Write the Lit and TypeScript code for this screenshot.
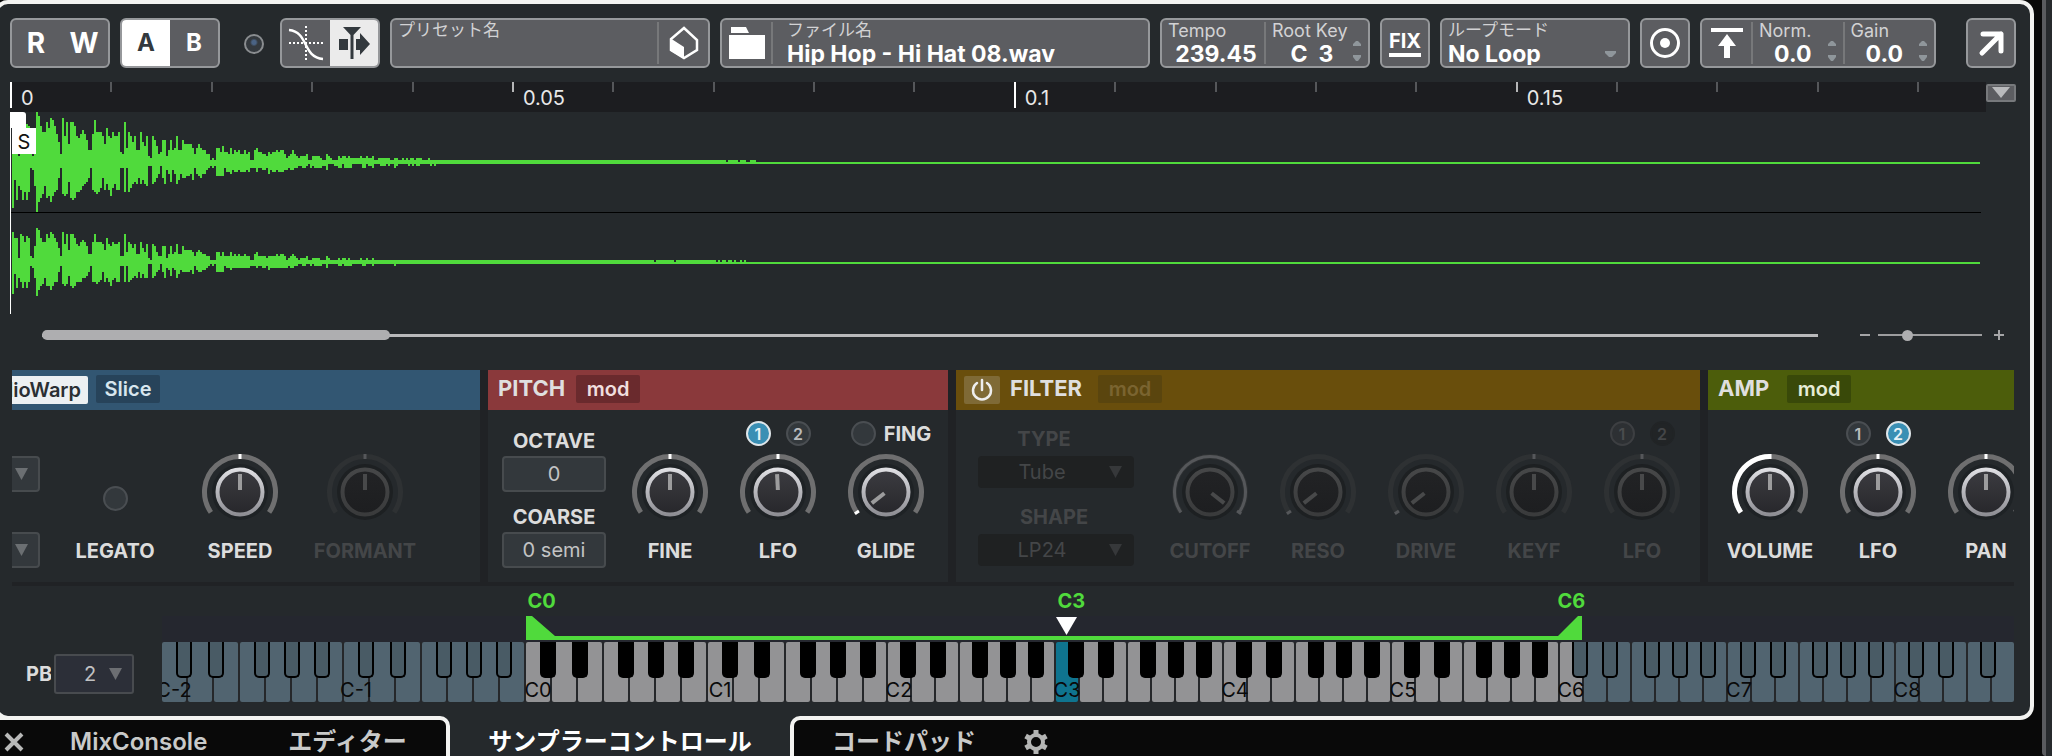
import { LitElement, html, svg, css, nothing } from "lit";
import { customElement, property } from "lit/decorators.js";
import { classMap } from "lit/directives/class-map.js";

// Peak heights above and below the centre line as [column, value] pairs, in 2px cells.
const PEAKS_UP = [
  0,21,1,16,3,2,4,19,5,18,6,14,7,18,8,17,9,3,10,2,11,10,12,24,13,22,14,17,15,14,17,19,18,16,19,21,20,20,21,17,22,13,23,9,
  24,3,25,21,26,12,27,19,28,8,29,19,31,17,32,12,33,11,34,13,35,15,36,13,37,10,38,5,40,13,41,20,42,14,45,12,46,8,47,16,48,12,
  49,11,50,14,51,12,53,14,54,4,55,3,56,19,57,6,58,14,59,12,60,9,61,12,62,5,64,14,65,9,66,7,67,12,68,2,69,1,70,12,71,10,
  72,7,73,3,74,4,75,10,77,2,78,5,79,10,80,5,81,6,82,12,83,5,85,10,86,8,90,6,91,3,92,6,93,8,94,6,95,5,97,3,99,0,100,1,101,0,
  102,6,104,4,105,7,106,4,108,3,109,6,110,3,111,5,112,4,113,5,114,3,116,5,117,3,118,4,119,0,121,5,122,6,123,4,125,3,127,2,
  128,4,129,3,130,4,132,5,133,4,134,5,136,3,137,1,138,2,139,3,140,5,141,3,142,2,143,1,144,2,147,3,148,0,150,2,154,1,155,0,
  157,3,158,2,159,1,160,0,163,2,164,1,165,2,167,1,168,2,169,1,174,2,175,1,177,2,178,1,180,2,181,0,183,1,189,0,191,1,193,0,
  195,1,196,0,197,1,198,0,199,1,201,0,202,1,205,0,208,1,209,0,213,0,
];
const PEAKS_DOWN = [
  0,22,1,8,2,18,3,11,4,13,5,18,6,14,7,18,8,14,9,2,10,3,11,11,12,24,13,19,14,17,15,15,16,11,17,17,18,16,19,19,20,16,21,14,
  22,13,23,7,24,2,25,15,26,16,27,15,28,9,29,17,30,18,31,17,32,14,34,13,35,11,36,10,37,9,38,7,39,2,40,13,41,14,42,15,43,14,
  44,12,45,7,46,13,47,10,48,13,49,16,50,12,51,10,52,13,54,2,56,14,57,2,58,14,59,12,60,10,61,9,62,10,63,7,64,10,65,8,66,10,
  67,11,68,1,70,10,71,9,72,7,73,5,74,1,75,7,76,10,77,3,78,5,79,9,80,3,81,5,82,10,83,8,84,5,85,7,87,6,89,5,90,8,91,2,92,5,
  93,6,94,7,95,5,97,3,98,2,99,1,100,2,101,1,102,6,106,2,107,4,109,5,110,3,111,4,113,3,114,4,117,3,118,4,119,2,122,4,123,2,
  125,3,127,2,128,5,129,3,130,4,132,3,133,4,136,3,138,2,139,3,141,2,143,1,145,2,147,1,148,0,149,2,150,1,151,2,155,1,157,3,
  158,0,161,1,163,2,165,0,166,2,170,0,175,2,177,0,178,1,180,2,181,0,184,1,187,0,188,1,189,0,191,2,192,1,193,0,198,1,199,0,
  200,1,201,0,202,1,204,0,209,1,210,0,211,1,212,0,213,0,
];

function steps(peaks: number[], base: number, dir: number, scale: (v: number) => number) {
  let d = `M2 ${base}`;
  for (let i = 0; i < peaks.length - 2; i += 2) {
    d += `V${base + dir * 2 * scale(peaks[i + 1])}H${2 + peaks[i + 2] * 2}`;
  }
  return d + `V${base}Z`;
}

const full = (v: number) => v;
const soft = (v: number) => Math.floor(v * 0.67 + 0.3);

const UI = css`
  :host { font-family: Inter, "Noto Sans CJK JP", sans-serif; }
  * { box-sizing: border-box; }
  button, input, select { font: inherit; color: inherit; margin: 0; padding: 0; border: 0; background: none; min-width: 0; }
  button { display: inline-flex; align-items: center; justify-content: center; cursor: pointer; }
  select { appearance: none; }
  svg { display: block; }
`;

@customElement("s-knob")
class Knob extends LitElement {
  @property() label = "";
  @property({ type: Number }) angle = 0;
  @property({ type: Number }) mark = 0;
  @property() fill = "";
  @property({ type: Boolean, reflect: true }) dim = false;

  static styles = [UI, css`
    :host { display: block; width: 108px; flex: none; --ring: #6f6f70; --mark: #fff; --hub: #1e2225; --pointer: #9c9c9d; --edge-a: #dedee2; --edge-b: #8e8e94; --face-a: #3c3c41; --face-b: #27272b; --text: #dcdcdc; }
    :host([dim]) { --ring: #2e3133; --mark: #55575a; --hub: #1d2022; --pointer: #48494a; --edge-a: #464748; --edge-b: #3a3b3c; --face-a: #222325; --face-b: #1d1e20; --text: #444648; }
    .cell { display: flex; flex-direction: column; align-items: center; }
    .top { height: 42px; padding-top: 11px; display: flex; align-items: flex-start; justify-content: center; white-space: nowrap; }
    .dial { width: 80px; height: 80px; overflow: visible; }
    .range { position: absolute; opacity: 0; width: 80px; height: 80px; }
    .body { position: relative; }
    .caption { margin-top: 7px; height: 24px; line-height: 24px; font-size: 20px; font-weight: 700; color: var(--text); }
    .ring { fill: none; stroke: var(--ring); stroke-width: 5; }
    .arc { fill: none; stroke: var(--mark); stroke-width: 5; }
    .thin { stroke-width: 3; }
    .hub { fill: var(--hub); }
    .mark { fill: var(--mark); }
    .pointer { fill: var(--pointer); }
    .ea { stop-color: var(--edge-a); } .eb { stop-color: var(--edge-b); }
    .fa { stop-color: var(--face-a); } .fb { stop-color: var(--face-b); }
  `];

  private arc(from: number, to: number) {
    const p = (a: number) => `${(35.5 * Math.sin(a * Math.PI / 180)).toFixed(2)} ${(-35.5 * Math.cos(a * Math.PI / 180)).toFixed(2)}`;
    return `M${p(from)}A35.5 35.5 0 ${to - from > 180 ? 1 : 0} 1 ${p(to)}`;
  }

  render() {
    return html`
      <div class="cell">
        <div class="top"><slot></slot></div>
        <div class="body">
          <input class="range" id="r" type="range" min="-125" max="125" .value=${String(this.angle)}>
          <svg class="dial" viewBox="-40 -40 80 80" aria-hidden="true">
            <defs>
              <linearGradient id="edge" x1="0" y1="0" x2="0" y2="1"><stop class="ea" offset="0"/><stop class="eb" offset="1"/></linearGradient>
              <linearGradient id="face" x1="0" y1="0" x2="0" y2="1"><stop class="fa" offset="0"/><stop class="fb" offset="1"/></linearGradient>
            </defs>
            <path class="ring" d=${this.arc(-125, 125)} />
            ${this.fill === "half" ? svg`<path class="arc" d=${this.arc(-125, 1)} />` : nothing}
            ${this.fill === "all" ? svg`<path class="arc thin" d=${this.arc(-125, 125)} />` : nothing}
            <rect class="mark" x="-1.5" y="-38" width="3" height="5" transform="rotate(${this.mark})" />
            <circle class="hub" r="28" />
            <circle r="22.5" fill="url(#face)" stroke="url(#edge)" stroke-width="4" />
            <rect class="pointer" x="-2" y="-18" width="4" height="16" transform="rotate(${this.angle})" />
          </svg>
        </div>
        <label class="caption" for="r">${this.label}</label>
      </div>`;
  }
}

@customElement("s-keyboard")
class Keyboard extends LitElement {
  static styles = [UI, css`
    :host { display: block; }
    .notes { position: relative; height: 30px; font-size: 20px; font-weight: 700; line-height: 22px; color: #50da3c; }
    .note { position: absolute; top: 4px; transform: translateX(-50%); }
    .strip { width: 100%; height: 26px; background: #25272f; }
    .keys { display: flex; gap: 2px; height: 60px; overflow: hidden; background: #25272a; }
    .key { flex: 11 0 0; position: relative; min-width: 0; }
    .wide { flex-grow: 12; }
    .white { width: 100%; height: 60px; border-radius: 2px; background: #516470; color: #0a0a0a; align-items: flex-end; padding-bottom: 1px; font-size: 20px; line-height: 22px; white-space: nowrap; overflow: visible; }
    .tag { position: relative; z-index: 1; pointer-events: none; }
    .on .white { background: #939395; }
    .root .white { background: #0f748f; }
    .black { position: absolute; z-index: 2; top: 0; width: 16px; height: 36px; background: #495b65; border: 2px solid #000; border-top: 0; border-radius: 0 0 5px 5px; }
    .lit { background: #000; }
    .k0, .k3 { right: -6px; }
    .k1 { right: -12px; }
    .k4 { right: -10px; }
    .k5 { right: -14px; }
  `];

  render() {
    const whites = Array.from({ length: 75 }, (_, i) => i);
    const pins: [string, number][] = [["C0", 20.5], ["C3", 49.1], ["C6", 76.1]];
    return html`
      <div class="notes">${pins.map(([t, x]) => html`<span class="note" style="left:${x}%">${t}</span>`)}</div>
      <svg class="strip" viewBox="0 0 1852 26" preserveAspectRatio="none" aria-hidden="true">
        <path fill="#50da3c" d="M364 0h6l23 20h1003l20-20h4v24H364Z" />
        <path fill="#fff" d="M894 1h21l-10.500 18Z" />
      </svg>
      <div class="keys">
        ${whites.map((i) => {
          const p = i % 7;
          const name = p === 0 ? `C${i / 7 - 2}` : "";
          const sharp = p !== 2 && p !== 6 && i < 74;
          return html`<div class=${classMap({ key: true, wide: i < 27, on: i >= 14 && i <= 56, root: i === 35 })}>
            <button class="white" aria-label=${name || "key"}><span class="tag">${name}</span></button>
            ${sharp ? html`<button aria-label="sharp" class=${classMap({ black: true, lit: i >= 14 && i < 56, [`k${p}`]: true })}></button>` : nothing}
          </div>`;
        })}
      </div>`;
  }
}

@customElement("app-root")
class AppRoot extends LitElement {
  static styles = [UI, css`
    :host { display: flex; background: #090909; color: #fff; line-height: 22px; overflow: hidden; }
    .stage { flex: 1; min-width: 0; }
    .side { width: 10px; margin-left: 8px; background: #272a2d; border-left: 4px solid #5a5b5f; border-bottom-left-radius: 4px; }
    .panel { margin-left: -6px; padding: 14px 14px 14px 12px; border: 4px solid #f3f3f1; border-radius: 14px; background: #25292c; }

    .bar { display: flex; gap: 10px; height: 50px; }
    .box { display: flex; flex: none; border: 2px solid #96989b; border-radius: 6px; background: #5c5d61; overflow: hidden; }
    .w50 { width: 50px; } .w100 { width: 100px; } .w190 { width: 190px; } .w210 { width: 210px; } .w236 { width: 236px; } .w320 { width: 320px; }
    .grow { flex: 1; min-width: 0; }
    .end { margin-left: 20px; }
    .half { flex: 1; font-weight: 700; font-size: 24px; }
    .rw { font-size: 28px; }
    .sel { background: #fff; color: #33393e; }
    .pale { background: #ebebeb; }
    .led { align-self: center; width: 20px; height: 20px; margin: 2px 6px 0 14px; border: 2px solid #8a8d90; border-radius: 50%; background: radial-gradient(circle at 50% 40%, #4a6384 2px, #34393e 4px); }
    .field { flex: 1; min-width: 0; display: grid; grid-template-columns: 1fr 16px; grid-template-rows: 22px 23px; padding-left: 6px; align-content: start; }
    .plain { grid-template-columns: 1fr; }
    .file { padding-left: 14px; }
    .name { grid-column: 1 / -1; grid-row: 1; font-size: 18px; color: #d2d2d4; white-space: nowrap; }
    .jp { font-size: 17px; line-height: 20px; }
    .value { grid-column: 1; grid-row: 2; width: 100%; font-size: 23px; font-weight: 700; height: 23px; outline: none; }
    .mid { text-align: center; }
    .spin { width: 10px; height: 22px; grid-column: 2; grid-row: 1 / 3; margin-top: 20px; fill: #8f969b; }
    .rule { width: 2px; flex: none; margin: 2px 0; background: #77787a; }
    .icon { width: 49px; flex: none; }
    .fix { align-self: center; margin: auto; font-size: 20px; font-weight: 700; line-height: 22px; padding-bottom: 1px; border-bottom: 4px solid #fff; }

    .rulerrow { display: flex; margin-top: 14px; height: 30px; }
    .ruler { flex: 1; min-width: 0; display: flex; overflow: hidden; background: #1c1d20; }
    .tick { flex: 0 0 5.08%; position: relative; padding: 5px 0 0 11px; font-size: 20px; line-height: 22px; color: #e8e8e8; }
    .tick::before { content: ""; position: absolute; left: 0; top: 0; width: 2px; height: 10px; background: #55575a; }
    .mark::before { background: #b5b6b7; }
    .major::before { height: 26px; background: #fff; }
    .drop { width: 30px; height: 18px; margin-top: 2px; background: #5c5d61; border: 2px solid #77797c; border-radius: 2px; }

    .wave { position: relative; margin-right: 2px; }
    .wave svg { width: 100%; height: 202px; }
    .flag { position: absolute; left: 0; top: 0; width: 16px; height: 16px; background: #fff; border-radius: 0 3px 0 0; }
    .start { position: absolute; left: 2px; top: 16px; width: 24px; height: 26px; background: #fff; color: #111; font-size: 20px; line-height: 28px; text-align: center; }

    .scroll { display: flex; align-items: center; height: 10px; margin: 16px 12px 30px 32px; }
    .track { flex: 1; height: 3px; background: #b9b9bb; display: flex; align-items: center; }
    .thumb { width: 19.6%; height: 10px; border-radius: 5px; background: #aeaeb0; }
    .zoom { appearance: none; width: 104px; height: 12px; margin: 0 12px 0 8px; background: linear-gradient(#9d9d9f, #9d9d9f) center / 100% 2px no-repeat; }
    .zoom::-webkit-slider-thumb { appearance: none; width: 11px; height: 11px; border-radius: 50%; background: #aeaeb0; }
    .minus { margin-left: 42px; }

    .modules { display: flex; gap: 8px; margin: 0 2px; padding-bottom: 4px; background: #202225; overflow: hidden; }
    .module { flex: none; overflow: hidden; background: #25292c; }
    .last { flex: 1; min-width: 0; }
    .s1 { width: 468px; } .s2 { width: 460px; } .s3 { width: 744px; }
    .head { display: flex; align-items: flex-start; height: 40px; padding: 5px 0 0 10px; color: #dfdfdf; font-size: 20px; }
    .title { font-size: 22px; line-height: 26px; font-weight: 700; margin: 0; }
    .blue { background: #325672; padding-left: 0; }
    .red { background: #8a393b; }
    .amber { background: #694e0c; padding-left: 8px; }
    .green { background: #4c5d0b; }
    .chip { width: 64px; height: 28px; border-radius: 2px; font-weight: 600; }
    .cblue { background: #27435a; color: #d8e6ee; margin-left: 8px; }
    .cred { background: #6a2a2d; color: #f0dede; margin-left: 11px; }
    .camber { background: #5a450e; color: #7a6430; margin-left: 16px; }
    .cgreen { background: #394909; color: #e6ecd6; margin-left: 18px; }
    .warp { width: 76px; height: 28px; margin-top: 1px; justify-content: flex-end; padding-right: 7px; background: #ecf0f2; color: #2a2f33; font-weight: 600; border-radius: 0 2px 2px 0; white-space: nowrap; overflow: hidden; }
    .power { width: 36px; height: 28px; margin: 1px 10px 0 0; background: #7f6a36; border-radius: 2px; }
    .controls { display: flex; height: 172px; }
    .spaced { gap: 17px; }
    .amp { padding-left: 8px; }
    .pads { display: flex; flex-direction: column; gap: 13px; padding-top: 19px; flex: none; }
    .fields { width: 104px; margin-left: 14px; margin-right: 10px; }
    .faded { width: 156px; margin-left: 22px; margin-right: 22px; padding-top: 17px; gap: 17px; color: #444648; }
    .pad { display: flex; flex-direction: column; gap: 3px; font-size: 20px; font-weight: 700; line-height: 24px; text-align: center; color: #dcdcdc; }
    .faded .pad { color: inherit; gap: 5px; padding: 0; }
    .faded .type { padding-right: 24px; }
    .faded .shape { padding-right: 4px; }
    .slot { width: 100%; height: 36px; border: 2px solid #474b4e; border-radius: 4px; background: #33383c; color: #c2c3c4; font-weight: 400; text-align: center; text-align-last: center; }
    .faded .slot { height: 32px; border: 0; background-color: #1f2122; color: #444648; padding-right: 28px; }
    .pick { position: relative; display: flex; }
    .caret { position: absolute; right: 12px; top: 50%; margin-top: -6px; width: 13px; height: 12px; fill: currentColor; pointer-events: none; }
    .faded .caret { fill: #36383a; }
    .cuts { padding-top: 46px; gap: 40px; width: 28px; overflow: hidden; color: #6b6f72; }
    .cuts .pick { width: 80px; margin-left: -52px; }
    .legato { width: 108px; margin-left: 4px; padding-top: 76px; display: flex; flex-direction: column; align-items: center; gap: 28px; font-size: 20px; font-weight: 700; line-height: 24px; color: #dcdcdc; }
    .dot { appearance: none; width: 25px; height: 25px; flex: none; margin: 0; border: 2px solid #4a4e52; border-radius: 50%; background: #33383c; font-size: 16px; font-weight: 600; line-height: 20px; color: #b9bbbc; }
    .gap { margin-left: 15px; }
    .active { background: #3a8fb4; border-color: #dfe6ea; color: #e8f2f6; }
    .ghost { background: #2d3033; border-color: #3d3f42; color: #4a4c4e; }
    .none { background: #212426; border-color: #212426; color: #444648; }
    .fing { display: flex; align-items: center; gap: 8px; margin-left: 10px; font-size: 20px; font-weight: 700; color: #dcdcdc; }

    .play { display: grid; grid-template-columns: 152px 1fr; margin-right: 2px; }
    .bend { display: flex; align-items: flex-end; padding: 0 0 8px 16px; font-size: 20px; }
    .pb { width: 25px; margin-right: 3px; overflow: hidden; font-weight: 700; line-height: 40px; color: #dcdcdc; }
    .amount { width: 80px; height: 40px; padding-right: 8px; border: 2px solid #484b4f; border-radius: 3px; background: #2c2f38; color: #c0c1c2; text-align-last: center; }
    .bend .pick { color: #6c6e72; }

    .tabs { position: relative; display: flex; height: 40px; margin-top: -4px; font-size: 24px; font-weight: 600; line-height: 28px; color: #c9cac9; }
    .group { position: relative; z-index: 1; display: flex; align-items: center; border: 0 solid #f3f3f1; border-top-width: 4px; padding-top: 8px; background: #090909; white-space: nowrap; }
    .left { width: 450px; border-right-width: 4px; border-top-right-radius: 10px; }
    .right { border-left-width: 4px; border-top-left-radius: 10px; padding-left: 38px; padding-right: 24px; gap: 47px; }
    .tab { height: 28px; }
    .close { margin: 0 46px 0 4px; }
    .mix { margin-right: 81px; }
    .current { width: 360px; margin: 0 -10px; padding-top: 12px; background: #25292c; color: #fff; font-weight: 700; }
  `];

  private spin() {
    return html`<svg class="spin" viewBox="0 0 10 22" aria-hidden="true"><path d="M1 6h8v-2l-3-3h-2l-3 3ZM1 15h8v2l-3 4h-2l-3-4Z" /></svg>`;
  }
  private caret() {
    return html`<svg class="caret" viewBox="0 0 13 12" aria-hidden="true"><path d="M0 0h13L6.500 12Z" /></svg>`;
  }
  private field(id: string, name: string, value: string) {
    return html`<div class="field">
      <label class="name" for=${id}>${name}</label>
      <input class="value mid" id=${id} .value=${value}>${this.spin()}
    </div>`;
  }
  private lfo(one: string, two: string) {
    return html`<button class="dot ${one}">1</button><button class="dot gap ${two}">2</button>`;
  }

  private toolbar() {
    return html`<div class="bar">
      <div class="box w100"><button class="half rw">R</button><button class="half rw">W</button></div>
      <div class="box w100"><button class="half sel">A</button><button class="half">B</button></div>
      <span class="led"></span>
      <div class="box w100">
        <button class="half" aria-label="Snap to zero crossing"><svg width="40" height="40" viewBox="0 0 40 40" fill="none" stroke="#fff">
          <path d="M20 3v34M3 20h34" stroke-width="2" stroke-dasharray="2 2" /><path d="M3 7C23 9 16 34 37 36" stroke-width="2.500" /></svg></button>
        <button class="half pale" aria-label="Snap"><svg width="36" height="36" viewBox="0 0 36 36" fill="#33393e">
          <path d="M7 2h18l-7.500 8v24h-3v-24ZM3 14h9v11H3ZM20 14h4V8l10 11-10 11v-5h-4Z" /></svg></button>
      </div>
      <div class="box w320">
        <div class="field plain"><span class="name jp">プリセット名</span></div>
        <span class="rule"></span>
        <button class="icon" aria-label="Preset"><svg width="30" height="34" viewBox="0 0 30 34"><path d="M15 2 28 14v10L15 32 2 24V13Z" fill="none" stroke="#fff" stroke-width="2.500" /><path d="M1 12 15 21v12L2 25Z" fill="#fff" /></svg></button>
      </div>
      <div class="box grow">
        <button class="icon" aria-label="Open file"><svg width="38" height="34" viewBox="0 0 38 34" fill="#fff"><path d="M3 1h15l3 6H3ZM1 9h36v24H1Z" /></svg></button>
        <span class="rule"></span>
        <div class="field plain file"><label class="name jp" for="file">ファイル名</label><input class="value" id="file" .value=${"Hip Hop - Hi Hat 08.wav"}></div>
      </div>
      <div class="box w210">
        <div class="field plain"><label class="name" for="tempo">Tempo</label><input class="value mid" id="tempo" .value=${"239.45"}></div>
        <span class="rule"></span>
        ${this.field("root", "Root Key", "C  3")}
      </div>
      <button class="box w50"><span class="fix">FIX</span></button>
      <div class="box w190">
        <div class="field plain"><label class="name jp" for="loop">ループモード</label>
          <select class="value" id="loop"><option>No Loop</option></select>
        </div>
        <svg width="24" height="46" viewBox="0 0 24 46" fill="#8f969b" aria-hidden="true"><path d="M1 31h11v2l-4 4h-3l-4-4Z" /></svg>
      </div>
      <button class="box w50" aria-label="Monitor"><svg width="32" height="32" viewBox="0 0 32 32"><circle cx="16" cy="16" r="13.500" fill="none" stroke="#fff" stroke-width="3" /><circle cx="16" cy="16" r="5" fill="#fff" /></svg></button>
      <div class="box w236">
        <button class="icon" aria-label="Normalize"><svg width="34" height="34" viewBox="0 0 34 34" fill="#fff"><path d="M1 2h32v4H1ZM17 8l9 12h-6v12h-6V20H8Z" /></svg></button>
        <span class="rule"></span>
        ${this.field("norm", "Norm.", "0.0")}
        <span class="rule"></span>
        ${this.field("gain", "Gain", "0.0")}
      </div>
      <button class="box w50 end" aria-label="Open editor"><svg width="30" height="30" viewBox="0 0 30 30" fill="none" stroke="#fff" stroke-width="5" stroke-linecap="round" stroke-linejoin="round"><path d="M7 6h18v17M25 6 6 25" /></svg></button>
    </div>`;
  }

  private waveform() {
    const ticks: Record<number, string> = { 0: "0", 5: "0.05", 10: "0.1", 15: "0.15" };
    return html`
      <div class="rulerrow">
        <div class="ruler">${Array.from({ length: 20 }, (_, i) => html`<span class=${classMap({ tick: true, mark: i % 5 === 0, major: i % 10 === 0 })}>${ticks[i]}</span>`)}</div>
        <button class="drop" aria-label="Ruler format"><svg width="20" height="12" viewBox="0 0 20 12"><path d="M1 0h18l-9 11Z" fill="#b9babc" /></svg></button>
      </div>
      <div class="wave">
        <svg viewBox="0 0 2004 202" preserveAspectRatio="none" shape-rendering="crispEdges" aria-hidden="true">
          <rect x="1" y="100" width="1970" height="1" fill="#000" />
          <g fill="#50da3c">
            <path d=${steps(PEAKS_UP, 48, -1, full)} /><path d=${steps(PEAKS_DOWN, 52, 1, full)} />
            <path d="M2 48H716v4H2ZM718 48h10v4h-10ZM730 48h6v4h-6ZM740 48h6v4h-6ZM2 50H1970v2H2Z" />
            <path d=${steps(PEAKS_UP, 148, -1, soft)} /><path d=${steps(PEAKS_DOWN, 152, 1, soft)} />
            <path d="M2 148H644v4H2ZM646 148h18v4h-18ZM666 148h40v4h-40ZM708 148h2v4h-2ZM712 148h4v4h-4ZM718 148h4v4h-4ZM724 148h2v4h-2ZM730 148h2v4h-2ZM734 148h2v4h-2ZM2 150H1970v2H2Z" />
          </g>
          <rect width="1" height="202" fill="#fff" />
        </svg>
        <span class="flag"></span><span class="start">S</span>
      </div>
      <div class="scroll">
        <div class="track"><div class="thumb"></div></div>
        <svg class="minus" width="10" height="12" viewBox="0 0 10 12"><path d="M0 5h10v2H0Z" fill="#a5a5a7" /></svg>
        <input class="zoom" type="range" aria-label="Zoom" min="0" max="100" value="26">
        <svg width="10" height="12" viewBox="0 0 10 12"><path d="M0 5h4V1h2v4h4v2H6v4H4V7H0Z" fill="#a5a5a7" /></svg>
      </div>`;
  }

  private modules() {
    return html`<div class="modules">
      <section class="module s1">
        <div class="head blue"><button class="warp">AudioWarp</button><button class="chip cblue">Slice</button></div>
        <div class="controls spaced">
          <div class="pads cuts">
            <div class="pick"><select class="slot" aria-label="Mode"><option></option></select>${this.caret()}</div>
            <div class="pick"><select class="slot" aria-label="Sync"><option></option></select>${this.caret()}</div>
          </div>
          <label class="legato"><input class="dot" type="checkbox">LEGATO</label>
          <s-knob label="SPEED"></s-knob><s-knob label="FORMANT" dim></s-knob>
        </div>
      </section>
      <section class="module s2">
        <div class="head red"><h2 class="title">PITCH</h2><button class="chip cred">mod</button></div>
        <div class="controls">
          <div class="pads fields">
            <label class="pad">OCTAVE<input class="slot" .value=${"0"}></label>
            <label class="pad">COARSE<input class="slot" .value=${"0 semi"}></label>
          </div>
          <s-knob label="FINE"></s-knob>
          <s-knob label="LFO" angle="-3">${this.lfo("active", "")}</s-knob>
          <s-knob label="GLIDE" angle="-128" mark="-125"><label class="fing"><input class="dot" type="checkbox">FING</label></s-knob>
        </div>
      </section>
      <section class="module s3">
        <div class="head amber">
          <button class="power" aria-label="Filter on"><svg width="24" height="24" viewBox="0 0 24 24" fill="none" stroke="#eee" stroke-width="2.500" stroke-linecap="round"><path d="M12 2v10M7 5a9 9 0 1 0 10 0" /></svg></button>
          <h2 class="title">FILTER</h2><button class="chip camber">mod</button></div>
        <div class="controls">
          <div class="pads faded">
            <label class="pad"><span class="type">TYPE</span><span class="pick"><select class="slot"><option>Tube</option></select>${this.caret()}</span></label>
            <label class="pad"><span class="shape">SHAPE</span><span class="pick"><select class="slot"><option>LP24</option></select>${this.caret()}</span></label>
          </div>
          <s-knob label="CUTOFF" dim angle="128" mark="125" fill="all"></s-knob>
          <s-knob label="RESO" dim angle="-128" mark="-125"></s-knob>
          <s-knob label="DRIVE" dim angle="-128" mark="-125"></s-knob>
          <s-knob label="KEYF" dim></s-knob>
          <s-knob label="LFO" dim>${this.lfo("ghost", "none")}</s-knob>
        </div>
      </section>
      <section class="module last">
        <div class="head green"><h2 class="title">AMP</h2><button class="chip cgreen">mod</button></div>
        <div class="controls amp">
          <s-knob label="VOLUME" fill="half"></s-knob>
          <s-knob label="LFO">${this.lfo("", "active")}</s-knob>
          <s-knob label="PAN"></s-knob>
        </div>
      </section>
    </div>`;
  }

  render() {
    return html`
      <div class="stage">
        <main class="panel">
          ${this.toolbar()} ${this.waveform()} ${this.modules()}
          <div class="play">
            <div class="bend"><label class="pb" for="pb">PB</label>
              <span class="pick"><select class="amount" id="pb"><option>2</option></select>${this.caret()}</span></div>
            <s-keyboard></s-keyboard>
          </div>
        </main>
        <nav class="tabs">
          <div class="group left">
            <button class="tab close" aria-label="Close"><svg width="20" height="20" viewBox="0 0 20 20" stroke="#b8b9b8" stroke-width="4"><path d="M2 2l16 16M18 2L2 18" /></svg></button>
            <button class="tab mix">MixConsole</button><button class="tab">エディター</button>
          </div>
          <button class="current">サンプラーコントロール</button>
          <div class="group right">
            <button class="tab">コードパッド</button>
            <button class="tab" aria-label="Settings"><svg width="26" height="26" viewBox="0 0 26 26" fill="none" stroke="#b4b5b4">
              <circle cx="13" cy="13" r="7" stroke-width="4" /><path d="M13 1v5M13 20v5M2.600 7l4.300 2.500M19.100 16.500l4.300 2.500M2.600 19l4.300-2.500M19.100 9.500l4.300-2.500" stroke-width="5" /></svg></button>
          </div>
        </nav>
      </div>
      <aside class="side"></aside>`;
  }
}
